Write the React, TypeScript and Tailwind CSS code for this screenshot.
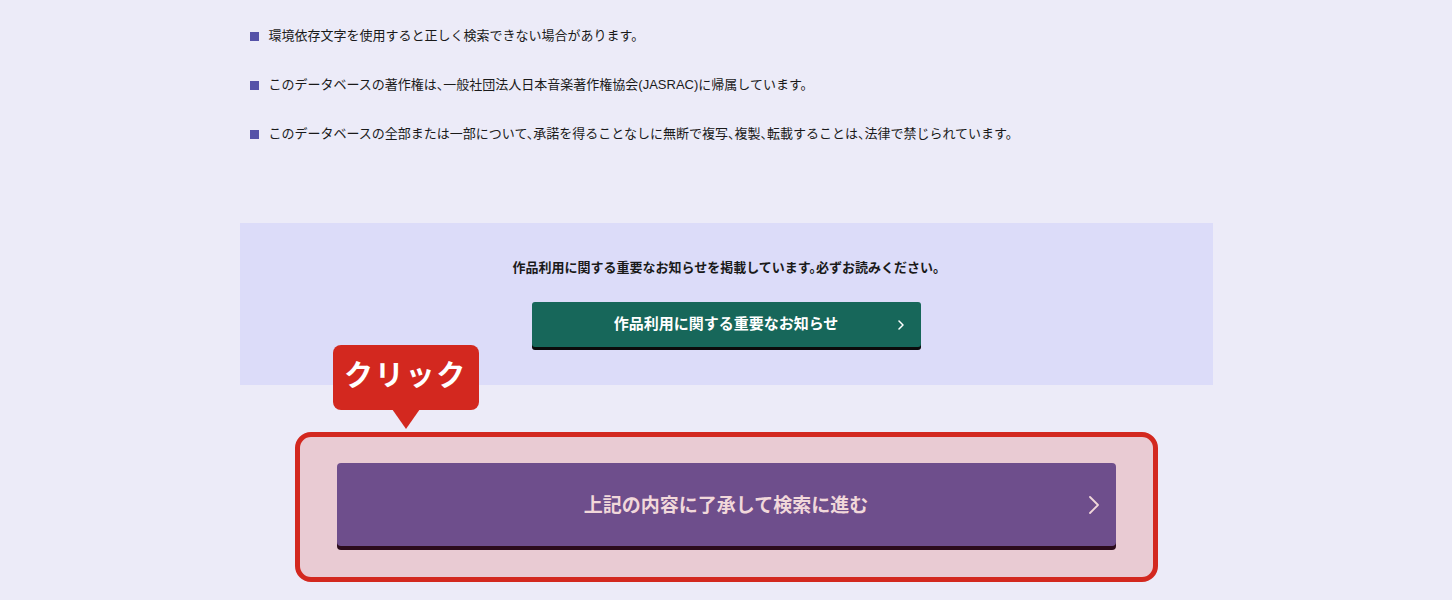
const notes = [
  "環境依存文字を使用すると正しく検索できない場合があります。",
  "このデータベースの著作権は、一般社団法人日本音楽著作権協会(JASRAC)に帰属しています。",
  "このデータベースの全部または一部について、承諾を得ることなしに無断で複写、複製、転載することは、法律で禁じられています。",
];

function Chevron({ className }: { className?: string }) {
  return (
    <svg viewBox="0 0 12 20" className={className} fill="none" stroke="currentColor" strokeLinecap="round" strokeLinejoin="round">
      <path d="M2 2l8 8-8 8" />
    </svg>
  );
}

export default function App() {
  return (
    <div
      className="min-h-[600px] bg-[#ecebf8] text-[#1a1a1a] [font-feature-settings:'halt']"
      style={{ fontFamily: '"Liberation Sans", "Noto Sans CJK JP", sans-serif' }}
    >
      <div className="mx-auto w-[973px]">
        {/* notes */}
        <ul className="flex flex-col gap-[29px] pl-[10px] pt-[26px]">
          {notes.map((n) => (
            <li key={n} className="flex h-[20px] items-center gap-[10px] text-[13px]">
              <span className="h-[9px] w-[9px] shrink-0 bg-[#5552a8]" />
              <span>{n}</span>
            </li>
          ))}
        </ul>

        {/* notice box */}
        <div className="mt-[79px] flex flex-col items-center bg-[#dcdcf9] pb-[38px] pt-[35px]">
          <p className="text-[13px] font-bold leading-[20px]">
            作品利用に関する重要なお知らせを掲載しています。必ずお読みください。
          </p>
          <button className="relative mt-[24px] flex h-[45px] w-[389px] items-center justify-center rounded-[3px] bg-[#17675a] text-[15px] font-bold text-white shadow-[0_3px_0_#0b0b0b]">
            作品利用に関する重要なお知らせ
            <Chevron className="absolute right-[17px] top-1/2 h-[10px] w-[6px] -translate-y-1/2 stroke-[3]" />
          </button>
        </div>

        {/* agree */}
        <div className="relative mx-auto mt-[47px] w-[863px] rounded-[16px] border-[5px] border-[#d3281f] bg-[#e9cbd3] px-[37px] pb-[31px] pt-[26px]">
          <div className="absolute left-[33px] top-[-92px] flex h-[65px] w-[146px] items-center justify-center rounded-[8px] bg-[#d3281f] pb-[2px] text-[29px] font-bold tracking-[0.06em] text-white">
            クリック
            <span className="absolute bottom-[-19px] left-1/2 h-0 w-0 -translate-x-1/2 border-x-[14px] border-t-[20px] border-x-transparent border-t-[#d3281f]" />
          </div>
          <button className="relative flex h-[83px] w-full items-center justify-center rounded-[4px] bg-[#6e4e8c] pt-[3px] text-[19px] font-bold text-[#f1d8da] shadow-[0_4px_0_#2b0c1c]">
            上記の内容に了承して検索に進む
            <Chevron className="absolute right-[16px] top-1/2 h-[20px] w-[12px] -translate-y-1/2 stroke-[1.8]" />
          </button>
        </div>
      </div>
    </div>
  );
}
